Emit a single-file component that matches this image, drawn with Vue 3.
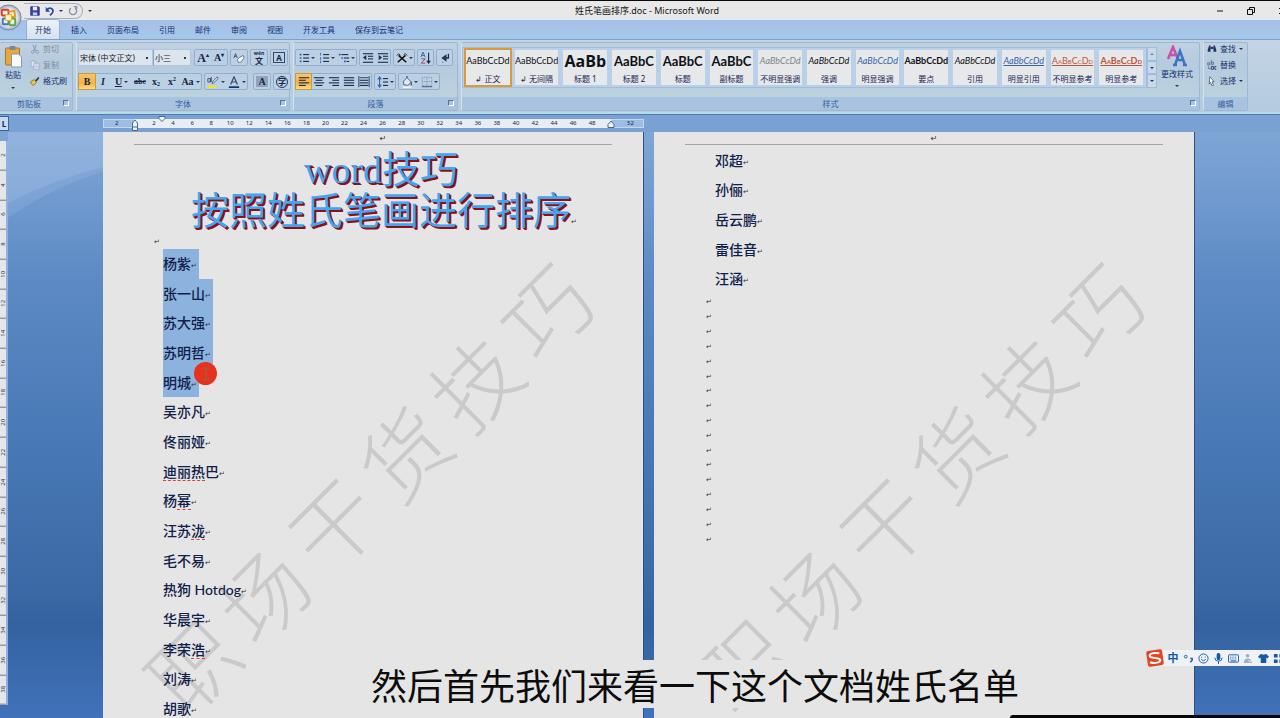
<script setup>
const tabs = ['插入', '页面布局', '引用', '邮件', '审阅', '视图', '开发工具', '保存到云笔记']

const styleTiles = [
  { name: '↲ 正文', cls: 'on' },
  { name: '↲ 无间隔', cls: '' },
  { name: '标题 1', cls: 'huge' },
  { name: '标题 2', cls: 'big' },
  { name: '标题', cls: 'big' },
  { name: '副标题', cls: 'big' },
  { name: '不明显强调', cls: 'it grey' },
  { name: '强调', cls: 'it' },
  { name: '明显强调', cls: 'it blue' },
  { name: '要点', cls: 'bold' },
  { name: '引用', cls: 'it' },
  { name: '明显引用', cls: 'it blue line' },
  { name: '不明显参考', cls: 'red line caps' },
  { name: '明显参考', cls: 'red line caps bold' },
]
const sample = (t) => {
  if (t.cls === 'huge') return 'AaBb'
  if (t.cls === 'big') return 'AaBbC'
  return 'AaBbCcDd'
}

const rulerMarks = Array.from({ length: 24 }, (_, i) => (i + 1) * 2)
const sideMarks = Array.from({ length: 19 }, (_, i) => (i + 1) * 2)
const watermark = [...'职场干货技巧']

const leftNames = [
  { t: '杨紫', sel: true },
  { t: '张一山', sel: true },
  { t: '苏大强', sel: true },
  { t: '苏明哲', sel: true },
  { t: '明城', sel: true },
  { t: '吴亦凡' },
  { t: '佟丽娅' },
  { bad: '迪丽热', after: '巴' },
  { t: '杨', bad: '幂' },
  { t: '汪苏', bad: '泷' },
  { t: '毛不易' },
  { t: '热狗 Hotdog' },
  { t: '华晨宇' },
  { t: '李荣', bad: '浩' },
  { t: '刘涛' },
  { t: '胡歌' },
]
const rightNames = ['邓超', '孙俪', '岳云鹏', '雷佳音', '汪涵']

const k = 'stroke="#1b2f52" stroke-width="1.3" fill="none"'
const lines = (a) => a.map(([x, y, w]) => `<path d="M${x} ${y}h${w}" ${k}/>`).join('')
const dots = '<path d="M2 3h2M2 7h2M2 11h2" stroke="#2d5fb0" stroke-width="2"/>'
const icons = {
  bullets: dots + lines([[6, 3, 7], [6, 7, 7], [6, 11, 7]]),
  numbers: '<path d="M3 1v3M3 6v3M3 10v3" stroke="#2d5fb0" stroke-width="1"/>' + lines([[6, 3, 7], [6, 7, 7], [6, 11, 7]]),
  levels: '<path d="M1 3h2M4 7h2M7 11h2" stroke="#2d5fb0" stroke-width="2"/>' + lines([[4, 3, 8], [7, 7, 6], [10, 11, 3]]),
  outdent: lines([[1, 2, 12], [7, 5, 6], [7, 8, 6], [1, 12, 12]]) + '<path d="M1 6.500l4-3v6z" fill="#1b2f52"/>',
  indent: lines([[1, 2, 12], [7, 5, 6], [7, 8, 6], [1, 12, 12]]) + '<path d="M6 6.500l-4-3v6z" fill="#1b2f52"/>',
  asian: '<path d="M2 12L11 4M3 4l9 8" stroke="#111" stroke-width="1.800"/><path d="M1 4l2-2 2 2M9 3l2-1 2 2" fill="none" stroke="#111"/>',
  sort: '<path d="M1 6L3.500 0 6 6M2 4h3" fill="none" stroke="#2d5fb0"/><path d="M1.500 8H6l-4.500 5H6" fill="none" stroke="#a03060"/><path d="M10 1v11M8 10l2 3 2-3" fill="none" stroke="#1b2f52" stroke-width="1.300"/>',
  mark: '<path d="M11 2v5H5M8 4L4 7l4 3z" fill="none" stroke="#1b2f52" stroke-width="1.500"/><path d="M4 12h1" stroke="#1b2f52"/>',
  left: lines([[1, 2, 12], [1, 5, 8], [1, 8, 12], [1, 11, 8]]),
  center: lines([[1, 2, 12], [3, 5, 8], [1, 8, 12], [3, 11, 8]]),
  right: lines([[1, 2, 12], [5, 5, 8], [1, 8, 12], [5, 11, 8]]),
  justify: lines([[1, 2, 12], [1, 5, 12], [1, 8, 12], [1, 11, 12]]),
  spread: lines([[2, 5, 10], [2, 8, 10], [2, 11, 10]]) + '<path d="M1 0v13M13 0v13M2 2h10" stroke="#1b2f52"/>',
  spacing: lines([[7, 3, 6], [7, 7, 6], [7, 11, 6]]) + '<path d="M3 1v12M1 4l2-3 2 3M1 10l2 3 2-3" fill="none" stroke="#2d5fb0" stroke-width="1.200"/>',
  fill: '<path d="M3 6l4-4 5 5-4 4-5-1z" fill="#dfe7f2" stroke="#44597c"/><path d="M7 2V0M12 7v4" stroke="#44597c" stroke-width="1.500"/><path d="M2 13h10" stroke="#eef3fa" stroke-width="2"/>',
  border: '<path d="M1.500 1.500h11v10h-11zM7 1.500v10M1.500 6.500h11" fill="none" stroke="#7288ae" stroke-dasharray="1 1"/><path d="M1 12.500h12" stroke="#33486e"/>',
  erase: '<path d="M8 6l4-2 1 3-4 5H6L5 9z" fill="#f3f5f8" stroke="#5c6f90"/><path d="M1 7l2-5 2 5M2 5h2" stroke="#33486e" fill="none"/>',
  marker: '<path d="M1 11h9v3H1z" fill="#f5e41c"/><path d="M6 9l1-3 5-5 1 2-5 5z" fill="#e2e7ee" stroke="#44597c"/><path d="M1 3h3v4H1zM4 3v4M5 1v6" fill="none" stroke="#33486e"/>',
  fontcolor: '<path d="M3 10L7 1l4 9M4.500 7h5" fill="none" stroke="#33486e" stroke-width="1.400"/><path d="M1 12h12v2H1z" fill="#15306b"/>',
  save: '<path d="M1 1h11l1 1v11H1z" fill="#3b3fae" stroke="#23267c"/><path d="M4 1h6v5H4z" fill="#eef"/><path d="M4 9h6v4H4z" fill="#c9cdf4"/>',
  undo: '<path d="M3 5c4-4 9-1 8 3-1 3-3 4-4 5" fill="none" stroke="#2648a8" stroke-width="2.400"/><path d="M1 1v7h6z" fill="#2648a8"/>',
  redo: '<path d="M10 3a5 5 0 1 1-6 0" fill="none" stroke="#8c96a8" stroke-width="2"/><path d="M7 0h6v5z" fill="#8c96a8"/>',
  cut: '<path d="M4 1l4 9M9 1L5 10" stroke="#7e93b3" stroke-width="1.300"/><circle cx="4" cy="11" r="2" fill="none" stroke="#7e93b3"/><circle cx="10" cy="11" r="2" fill="none" stroke="#7e93b3"/>',
  copy: '<path d="M1.500 1.500h6v8h-6z" fill="#dfe6ef" stroke="#91a2bb"/><path d="M5.500 4.500h7v9h-7z" fill="#e9edf3" stroke="#91a2bb"/><path d="M7 7h4M7 9h4M7 11h4" stroke="#a6b5ca"/>',
  brush: '<path d="M1 8l5-3 3 4-4 4c-2 0-4-2-4-5z" fill="#f0c63e" stroke="#7c6420"/><path d="M7 6l5-5 1 2-4 5z" fill="#3f3f48"/>',
  find: '<path d="M1 8l2-6h2v9H1zM13 8l-2-6H9v9h4z" fill="#23355e"/><path d="M5 4h4v3H5z" fill="#23355e"/>',
  replace: '<path d="M1 4h3v3H1zM6 0v6h3V3H6" fill="none" stroke="#44597c"/><path d="M2 9v3h3" fill="none" stroke="#2d5fb0"/><path d="M6 9h3v4H6zM13 9h-2v4h2" fill="none" stroke="#23355e" stroke-width="1.200"/>',
  select: '<path d="M4 1l6 7H7l2 5-2 1-2-5-2 2z" fill="#fff" stroke="#33486e"/>',
}
const paraTop = [
  [['bullets', 1], ['numbers', 1], ['levels', 1]],
  [['outdent'], ['indent']],
  [['asian', 1]],
  [['sort']],
  [['mark']],
]
const paraBottom = [
  [['left', 0, 1], ['center'], ['right'], ['justify'], ['spread']],
  [['spacing', 1]],
  [['fill', 1], ['border', 1]],
]
</script>

<template>
  <div class="window">
    <header class="titlebar">
      <div class="quick">
        <button class="ic" aria-label="保存"><svg viewBox="0 0 14 14" v-html="icons.save" /></button>
        <button class="ic" aria-label="撤消"><svg viewBox="0 0 14 14" v-html="icons.undo" /><i class="arrow"></i></button>
        <button class="ic" aria-label="恢复"><svg viewBox="0 0 14 14" v-html="icons.redo" /></button>
      </div>
      <button class="more" aria-label="自定义快速访问工具栏"><i></i></button>
      <h1>姓氏笔画排序.doc - Microsoft Word</h1>
      <div class="wctl">
        <button aria-label="最小化"><svg viewBox="0 0 8 8"><path d="M1 4h6" stroke="#111" /></svg></button>
        <button aria-label="还原"><svg viewBox="0 0 8 8"><path d="M.5 2.500h5v5h-5zM2.500 2V.5h5v5H6" fill="none" stroke="#111" /></svg></button>
        <button aria-label="关闭"><svg viewBox="0 0 8 8"><path d="M1 1l6 6M7 1L1 7" stroke="#111" /></svg></button>
      </div>
    </header>
    <button class="office" aria-label="Office 按钮">
      <svg viewBox="0 0 28 28">
        <defs><radialGradient id="orb"><stop offset="0" stop-color="#fff" /><stop offset=".7" stop-color="#dfe5ee" /><stop offset="1" stop-color="#9aa9c0" /></radialGradient></defs>
        <circle cx="14" cy="14" r="13" fill="url(#orb)" stroke="#7787a3" />
        <rect x="7" y="6" width="7" height="6" rx="1" fill="none" stroke="#d8431d" stroke-width="2" />
        <path d="M14 8l6-1 1 6-6 1" fill="none" stroke="#f09a1c" stroke-width="2" />
        <rect x="8" y="15" width="6" height="6" rx="1" fill="none" stroke="#3c78cf" stroke-width="2" />
        <rect x="15" y="15" width="6" height="7" rx="1" fill="none" stroke="#63a63a" stroke-width="2" />
        <rect x="11" y="11" width="6" height="6" fill="#fff1c8" stroke="#eeb321" />
      </svg>
    </button>
    <nav class="tabs">
      <button class="tab active">开始</button>
      <button v-for="t in tabs" :key="t" class="tab">{{ t }}</button>
    </nav>

    <div class="ribbon">
      <section class="group clip">
        <div class="body">
          <button class="paste">
            <svg viewBox="0 0 18 22"><rect x="1" y="2" width="14" height="17" rx="1" fill="#e9a83c" stroke="#a9752a" /><rect x="5" y="0" width="6" height="4" rx="1" fill="#7d8794" /><path d="M7 8h7l3 3v10H7z" fill="#f7f9fc" stroke="#8a98ae" /></svg>
            <span>粘贴</span><i class="arrow"></i>
          </button>
          <div class="list">
            <button class="off"><svg viewBox="0 0 14 14" v-html="icons.cut" />剪切</button>
            <button class="off"><svg viewBox="0 0 14 14" v-html="icons.copy" />复制</button>
            <button><svg viewBox="0 0 14 14" v-html="icons.brush" />格式刷</button>
          </div>
        </div>
        <footer>剪贴板<i class="launch"></i></footer>
      </section>

      <section class="group font">
        <div class="body rows">
          <div class="row">
            <div class="combos">
              <select aria-label="字体"><option>宋体 (中文正文)</option></select>
              <select class="size" aria-label="字号"><option>小三</option></select>
            </div>
            <div class="set"><button class="g serif grow">A<sup>▴</sup></button><button class="g serif">A<sup>▾</sup></button></div>
            <div class="set"><button class="g" aria-label="清除格式"><svg viewBox="0 0 14 14" v-html="icons.erase" /></button></div>
            <div class="set"><button class="g wen" aria-label="拼音指南"><small>wén</small><span>文</span></button></div>
            <div class="set"><button class="g" aria-label="字符边框"><b class="boxed">A</b></button></div>
          </div>
          <div class="row">
            <div class="set">
              <button class="g serif hot">B</button>
              <button class="g serif ital">I</button>
              <button class="g serif under wide">U<i class="arrow"></i></button>
              <button class="g serif strike">abc</button>
              <button class="g serif">x<sub>2</sub></button>
              <button class="g serif">x<sup>2</sup></button>
              <button class="g serif wide">Aa<i class="arrow"></i></button>
            </div>
            <div class="set">
              <button class="g wide" aria-label="突出显示"><svg viewBox="0 0 14 14" v-html="icons.marker" /><i class="arrow"></i></button>
              <button class="g wide" aria-label="字体颜色"><svg viewBox="0 0 14 14" v-html="icons.fontcolor" /><i class="arrow"></i></button>
            </div>
            <div class="set push"><button class="g serif" aria-label="字符底纹"><b class="shade">A</b></button></div>
            <div class="set"><button class="g" aria-label="带圈字符"><b class="ring">字</b></button></div>
          </div>
        </div>
        <footer>字体<i class="launch"></i></footer>
      </section>

      <section class="group para">
        <div class="body rows">
          <div v-for="(r, n) in [paraTop, paraBottom]" :key="n" class="row">
            <div v-for="(s, i) in r" :key="i" class="set">
              <button v-for="b in s" :key="b[0]" class="g" :class="{ wide: b[1], hot: b[2] }" :aria-label="b[0]">
                <svg viewBox="0 0 14 14" v-html="icons[b[0]]" /><i v-if="b[1]" class="arrow"></i>
              </button>
            </div>
          </div>
        </div>
        <footer>段落<i class="launch"></i></footer>
      </section>

      <section class="group styles">
        <div class="body">
          <div class="gallery">
            <button v-for="t in styleTiles" :key="t.name" class="tile" :class="t.cls">
              <span class="sample">{{ sample(t) }}</span>
              <span class="name">{{ t.name }}</span>
            </button>
          </div>
          <div class="scroll">
            <button aria-label="向上"><i class="arrow up"></i></button>
            <button aria-label="向下"><i class="arrow"></i></button>
            <button aria-label="其他"><i class="arrow"></i></button>
          </div>
          <button class="change">
            <svg viewBox="0 0 20 22"><path d="M1 14L6 2l5 12M3 10h6" fill="none" stroke="#c94fa8" stroke-width="2.500" /><path d="M8 20l5-14 5 14M10 15h6M6 20h4M16 20h4" fill="none" stroke="#3f73c4" stroke-width="2.500" /></svg>
            <span>更改样式</span><i class="arrow"></i>
          </button>
        </div>
        <footer>样式<i class="launch"></i></footer>
      </section>

      <section class="group edit">
        <div class="body">
          <div class="list">
            <button><svg viewBox="0 0 14 14" v-html="icons.find" />查找<i class="arrow"></i></button>
            <button><svg viewBox="0 0 14 14" v-html="icons.replace" />替换</button>
            <button><svg viewBox="0 0 14 14" v-html="icons.select" />选择<i class="arrow"></i></button>
          </div>
        </div>
        <footer>编辑</footer>
      </section>
    </div>

    <div class="rulerbar cols">
      <div><button class="tabstop" aria-label="制表符">L</button></div>
      <div class="ruler">
        <span class="end">2</span>
        <div class="scale">
          <span v-for="m in rulerMarks" :key="m">{{ m }}</span>
          <svg class="stop lead" viewBox="0 0 8 12"><path d="M1.500 8V4L4 1l2.500 3v7.500h-5V8h5" fill="#eef3f9" stroke="#4b648f" /></svg>
          <svg class="stop first" viewBox="0 0 8 6"><path d="M1 .5h6v2L4 5.500 1 2.500z" fill="#eef3f9" stroke="#4b648f" /></svg>
          <svg class="stop trail" viewBox="0 0 8 8"><path d="M1 7.500v-3L4 1l3 3.500v3z" fill="#eef3f9" stroke="#4b648f" /></svg>
        </div>
        <span class="end tail">52</span>
      </div>
    </div>

    <main class="work">
      <svg class="sweep" viewBox="0 0 100 80" preserveAspectRatio="none">
        <path d="M0 0H100V31Q45 43 0 63Z" fill="#a9c6ea" opacity=".28" />
        <path d="M0 0H100V35Q45 50 0 76Z" fill="#a9c6ea" opacity=".22" />
      </svg>
      <aside class="vruler"><span v-for="m in sideMarks" :key="m">{{ m }}</span></aside>
      <div class="cols sheets">
        <div></div>
        <article class="page">
          <div class="wm"><span v-for="c in watermark" :key="c">{{ c }}</span></div>
          <div class="head">↵</div>
          <div class="art"><p>word技巧</p><p>按照姓氏笔画进行排序<i class="ret">↵</i></p></div>
          <i class="ret lone">↵</i>
          <ul class="names">
            <li v-for="n in leftNames" :key="n.t + n.bad">
              <span :class="{ sel: n.sel }">{{ n.t }}<u v-if="n.bad">{{ n.bad }}</u>{{ n.after }}<i class="ret">↵</i></span>
            </li>
          </ul>
        </article>
        <div></div>
        <article class="page">
          <div class="wm"><span v-for="c in watermark" :key="c">{{ c }}</span></div>
          <div class="head">↵</div>
          <ul class="names few">
            <li v-for="n in rightNames" :key="n"><span>{{ n }}<i class="ret">↵</i></span></li>
          </ul>
          <div class="blanks"><i v-for="n in 17" :key="n" class="ret">↵</i></div>
        </article>
        <div></div>
      </div>
    </main>

    <div class="pointer"><svg viewBox="0 0 8 14"><path d="M1 1h2l1 1 1-1h2M4 2v10M1 13h2l1-1 1 1h2" fill="none" stroke="#8a6a4a" /></svg></div>
    <p class="caption">然后首先我们来看一下这个文档姓氏名单</p>

    <div class="ime">
      <svg class="sogou" viewBox="0 0 20 20"><g transform="rotate(-8 10 10)"><rect x="2" y="2" width="16" height="16" rx="2" fill="#e8431f" /><path d="M15 6C9 4 5 5 5 7.500S15 10 15 12.500 9 16 4.500 13.500" fill="none" stroke="#fff" stroke-width="2" /></g></svg>
      <div class="imebar">
        <button>中</button>
        <button aria-label="标点"><svg viewBox="0 0 12 12"><circle cx="3" cy="4" r="1.500" fill="none" stroke="#1558a8" /><path d="M8 6h2v2L8 10" fill="none" stroke="#1558a8" stroke-width="1.500" /></svg></button>
        <button aria-label="表情"><svg viewBox="0 0 12 12"><circle cx="6" cy="6" r="5" fill="none" stroke="#1558a8" /><path d="M4 4v1M8 4v1M3.500 7q2.500 3 5 0" fill="none" stroke="#1558a8" /></svg></button>
        <button aria-label="语音"><svg viewBox="0 0 12 12"><rect x="4" y="0" width="4" height="8" rx="2" fill="#1558a8" /><path d="M2 5q0 4 4 4t4-4M6 9v3" fill="none" stroke="#1558a8" /></svg></button>
        <button aria-label="键盘"><svg viewBox="0 0 12 12"><rect x=".5" y="2" width="11" height="8" rx="1" fill="none" stroke="#1558a8" /><path d="M2 4.500h8M2 6.500h8" stroke="#1558a8" stroke-dasharray="1 1" /><path d="M3 8.500h6" stroke="#1558a8" /></svg></button>
        <button aria-label="用户"><svg viewBox="0 0 12 12"><circle cx="5" cy="3" r="2" fill="#9fb0c6" /><path d="M1 11q0-5 4-5t5 5z" fill="#9fb0c6" /><path d="M6 8l2 2 3-3" fill="none" stroke="#fff" /></svg></button>
        <button aria-label="皮肤"><svg viewBox="0 0 12 12"><path d="M3 1l3 1 3-1 3 3-2 2-1-1v6H3V5L2 6 0 4z" fill="#1558a8" /></svg></button>
        <button aria-label="工具箱"><svg viewBox="0 0 12 12"><path d="M1 1h4v4H1zM7 1h4v4H7zM1 7h4v4H1zM7 7h4v4H7z" fill="#1558a8" /></svg></button>
      </div>
    </div>
    <div class="overlay-edge"></div>
  </div>
</template>

<style>
html, body { margin: 0; overflow: hidden; }
</style>

<style scoped>
.window {
  position: relative; display: flex; flex-direction: column; height: 100vh; overflow: hidden;
  box-sizing: border-box; border-top: 1px solid #0c0808; background: #7ba2d4;
  font-family: "Noto Sans", "Noto Sans CJK SC", sans-serif; font-size: 8px; line-height: 12px; color: #14306e;
}
button, select { font: inherit; color: inherit; background: none; border: 0; padding: 0; margin: 0; }
button { display: flex; align-items: center; justify-content: center; }
i { font-style: normal; }
svg { display: block; flex: none; }
p, h1, ul { margin: 0; padding: 0; list-style: none; }

.titlebar { display: flex; align-items: center; height: 19px; flex: none; background: #e8e8e8; padding-left: 24px; }
.quick { display: flex; align-items: center; gap: 5px; height: 14px; width: 52px; padding-left: 6px; border: 1px solid #a9afba; border-left: 0; border-radius: 0 8px 8px 0; }
.ic { gap: 4px; }
.ic svg { width: 10px; height: 10px; }
.more { margin-left: 5px; }
.more i, .arrow { border: 2px solid transparent; border-top-color: #26375e; border-bottom: 0; }
h1 { flex: 1; text-align: center; font-size: 9px; font-weight: 400; color: #151515; padding-right: 14px; }
.wctl { display: flex; gap: 23px; margin-right: -6px; }
.wctl svg { width: 8px; height: 8px; }
.office { position: absolute; left: -5px; top: 3px; z-index: 2; }
.office svg { width: 27px; height: 27px; }

.tabs { display: flex; gap: 4px; height: 19px; flex: none; padding-left: 27px; background: linear-gradient(#a6bfe6, #a5c9ea); }
.tab { padding: 0 8px; }
.active { background: linear-gradient(#eef2f8, #d3e2ee); border-radius: 2px 2px 0 0; box-shadow: 0 0 0 1px #8fb0d8; }

.ribbon { display: flex; gap: 3px; height: 75px; box-sizing: border-box; flex: none; padding: 2px 32px 1px 0; background: linear-gradient(#c3d4e6, #b2cbdd); border-top: 1px solid #7f9fc8; border-bottom: 2px solid #b4dbe6; }
.group { display: flex; flex-direction: column; flex: none; border: 1px solid #9db8d2; border-left-color: #d5e2ee; border-radius: 2px; box-sizing: border-box; background: linear-gradient(#c0d1e2 0, #b5cbde 30%, #bdd4e0 100%); }
.clip { width: 73px; border-left: 0; }
.font { width: 214px; }
.para { width: 165px; }
.styles { flex: 1; min-width: 0; }
.edit { width: 45px; }
.body { flex: 1; display: flex; min-height: 0; }
footer { display: flex; align-items: center; justify-content: center; position: relative; height: 13px; background: #a8c2e0; color: #35609c; }
.clip footer { padding-right: 14px; }
.launch { position: absolute; right: 3px; top: 3px; width: 4px; height: 4px; border: 1px solid #55739e; border-right-color: #fff; border-bottom-color: #fff; }
.paste { flex-direction: column; width: 26px; gap: 1px; justify-content: flex-start; padding-top: 3px; }
.paste svg { width: 19px; height: 22px; }
.paste .arrow { margin-top: 5px; }
.list { display: flex; flex-direction: column; gap: 4px; margin-left: 4px; }
.list button { justify-content: flex-start; gap: 3px; height: 12px; white-space: nowrap; }
.list svg { width: 10px; height: 10px; }
.list .off { color: #7e8da3; }
.edit .list { margin-left: 3px; }

.rows { flex-direction: column; gap: 6px; padding: 6px 1px 0; }
.row { display: flex; gap: 2px; height: 18px; }
.combos { display: flex; width: 122px; margin-right: 1px; }
select { appearance: none; flex: 1; min-width: 0; height: 17px; border: 1px solid #b3c6dd; background: linear-gradient(#26375e, #26375e) no-repeat right 4px center / 2px 2px #dce4ed; color: #10182c; padding-left: 1px; font-size: 8px; }
.size { flex: none; width: 38px; border-left: 1px solid #8aa5c8; }
.set { display: flex; box-sizing: border-box; height: 17px; border: 1px solid #92aed0; border-radius: 2px; background: #bcd0e4; }
.push { margin-left: 3px; }
.g { width: 15px; color: #15264a; }
.g svg { width: 12px; height: 12px; }
.font .g { width: 16px; }
.font .row:last-child .wide { width: 21px; gap: 2px; }
.para .wide { width: 20px; gap: 1px; }
.serif { font-family: "Liberation Serif", serif; font-weight: 700; font-size: 10px; }
.serif sup, .serif sub { font-size: 6px; line-height: 6px; align-self: flex-start; margin-top: 2px; }
.serif sub { align-self: flex-end; margin: 0 0 2px; }
.grow { font-size: 12px; }
.ital { font-style: italic; }
.under { text-decoration: underline; }
.strike { font-size: 8px; text-decoration: line-through; }
.hot { background: linear-gradient(#f3c66e, #f9b23c 60%, #fbdc8a); box-shadow: 0 0 0 1px #c79a4a; }
.wen { flex-direction: column; font-weight: 700; }
.wen small { font-size: 5px; line-height: 5px; }
.wen span { line-height: 9px; }
.boxed { border: 1px solid #33486e; padding: 0 2px; line-height: 9px; }
.shade { background: #93a3ba; padding: 0 2px; line-height: 11px; }
.ring { border: 1px solid #26375e; border-radius: 50%; line-height: 10px; width: 10px; }

.styles .body { padding: 4px 4px 0 0; }
.gallery { flex: 1; display: flex; gap: 5px; height: 41px; box-sizing: border-box; border: 1px solid #9fbddc; padding: 2px 3px; background: #b9d0e8; min-width: 0; }
.tile { flex: 1 1 0; min-width: 0; flex-direction: column; justify-content: space-between; overflow: hidden; background: #e6e8ea; color: #0f1114; }
.sample { font-family: Lato, "Open Sans", sans-serif; font-size: 9px; line-height: 22px; height: 22px; white-space: nowrap; }
.name { color: #161b55; line-height: 13px; white-space: nowrap; }
.on { outline: 2px solid #d99a3c; }
.huge .sample { font-size: 16px; font-weight: 700; font-family: "Open Sans", sans-serif; }
.big .sample { font-size: 13px; font-weight: 700; }
.it .sample { font-style: italic; }
.bold .sample { font-weight: 700; }
.grey .sample { color: #858585; }
.blue .sample { color: #3566ac; }
.red .sample { color: #bd5440; }
.line .sample { text-decoration: underline; }
.caps .sample { font-variant: small-caps; }
.scroll { display: flex; flex-direction: column; width: 10px; height: 41px; }
.scroll button { flex: 1; border: 1px solid #9fbddc; background: #c9d9ea; }
.up { transform: rotate(180deg); opacity: .5; }
.change { width: 36px; flex-direction: column; justify-content: flex-start; margin-left: 2px; margin-top: -2px; }
.change svg { width: 22px; height: 22px; }
.change span { line-height: 14px; white-space: nowrap; }
.change .arrow { margin-top: 4px; }

.cols { display: grid; grid-template-columns: 103fr 541fr 10fr 541fr 85fr; }
.rulerbar { height: 18px; flex: none; background: #7aa1d3; border-top: 1px solid #5379ae; box-sizing: border-box; }
.tabstop { width: 9px; height: 15px; margin-top: 1px; font-weight: 700; color: #0e2350; background: #c6daf2; border: 1px solid #3a62a0; border-left: 0; }
.ruler { display: grid; grid-template-columns: 32fr 476fr 33fr; height: 9px; margin-top: 4px; font-size: 6px; line-height: 9px; color: #1b2540; }
.end { background: #9dbce2; padding-left: 11px; border: 1px solid #c1d6ef; box-sizing: border-box; line-height: 7px; }
.tail { padding-left: 15px; }
.scale { position: relative; display: flex; background: #e9ecf0; padding: 0 2%; }
.scale span { flex: 1; text-align: center; }
.stop { position: absolute; width: 8px; }
.lead { left: -4px; top: 0; height: 12px; }
.first { left: 23px; top: -3px; height: 6px; }
.trail { right: -4px; top: 1px; height: 8px; }

.work { position: relative; flex: 1; min-height: 0; display: flex; background: linear-gradient(#7fa5d4 0, #6f99cf 12%, #5d8ac4 25%, #4a7ab7 50%, #3a69a6 78%, #3462a0 84%, #4172ba 100%); }
.sweep { position: absolute; left: 8px; top: 0; width: 95px; height: 90px; }
.vruler { position: absolute; left: 0; top: 9px; width: 6px; display: grid; grid-auto-rows: 1fr; height: 564px; background: #e4e6ea; border-right: 2px solid #8fb1e0; font-size: 6px; line-height: 6px; color: #333; }
.vruler span { writing-mode: vertical-rl; transform: rotate(180deg); text-align: center; border-top: 1px solid #777; }
.sheets { flex: 1; }
.page { position: relative; background: #e5e5e5; overflow: hidden; border: solid #2d5080; border-width: 0 1px 0 0; padding: 0 31px; }
.head { text-align: center; height: 12px; font: 8px/13px "DejaVu Sans", sans-serif; color: #333; border-bottom: 1px solid #a5a5a5; padding-left: 20px; }
.wm { position: absolute; left: 50%; top: 355px; width: 600px; margin: -50px 0 0 -306px; display: grid; grid-template-columns: repeat(6, 1fr); justify-items: center; font: 300 86px/100px "Noto Sans CJK SC", sans-serif; color: #cacaca; transform: rotate(-45deg); }
.ret { font: 7px/8px "DejaVu Sans", sans-serif; color: #333; text-shadow: none; }
.art { position: relative; padding-top: 5px; text-align: center; font: 38px/41px "Liberation Serif", "Noto Sans CJK SC", serif; color: #46a5ee; text-shadow: 1px 1px #8c1018, 2px 2px #8c1018; padding-left: 16px; }
.art p { height: 41px; white-space: nowrap; }
.art p + p .ret { margin-right: -6px; }
.lone { display: block; position: relative; margin: 6px 0 0 20px; height: 8px; }
.names { position: relative; display: grid; grid-auto-rows: 1fr; height: 475px; margin: 3px 0 0 29px; font: 500 14px/20px Lato, "Noto Sans CJK SC", sans-serif; color: #10204a; }
.names li { display: flex; }
.names span { display: flex; align-items: center; white-space: pre; }
.names .ret { padding-top: 4px; }
.sel { background: #8cb2de; padding-right: 2px; }
.names u { text-decoration: none; line-height: 16px; margin: 2px 0 1px; border-bottom: 1px dashed #d9403c; }
.few { height: 148px; margin: 1px 0 0 30px; }
.blanks { position: relative; display: grid; grid-auto-rows: 1fr; height: 252px; margin: 1px 0 0 21px; align-items: center; }

.pointer { position: absolute; left: 194px; top: 361px; width: 23px; height: 23px; border-radius: 50%; background: #e6331f; display: flex; align-items: center; justify-content: center; }
.pointer svg { width: 8px; height: 14px; }
.caption { position: absolute; left: 50%; bottom: 10px; transform: translateX(-50%); margin-left: 55px; padding: 0 11px; background: #e5e5e5; color: #0c0c0c; font: 36px/48px "Noto Sans CJK SC", sans-serif; white-space: nowrap; }
.ime { position: absolute; right: 0; bottom: 50px; width: 135px; display: flex; align-items: center; }
.sogou { width: 20px; height: 20px; position: relative; z-index: 1; }
.imebar { flex: 1; display: flex; gap: 3px; height: 16px; background: #eef1f5; margin-left: -4px; padding-left: 6px; overflow: hidden; color: #1558a8; }
.imebar button { font-size: 11px; font-weight: 700; width: 12px; flex: none; }
.imebar svg { width: 11px; height: 11px; }
.overlay-edge { position: absolute; right: 0; bottom: 0; width: 270px; height: 3px; background: #060606; border-radius: 4px 0 0 0; }
</style>
